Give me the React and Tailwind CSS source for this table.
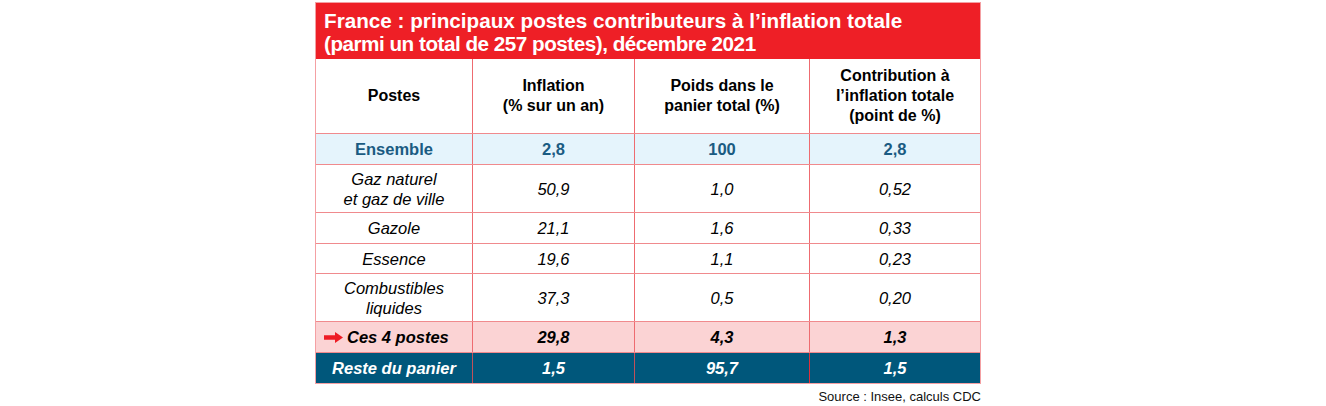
import React from 'react'

const rows = [
    { label: ['Gaz naturel', 'et gaz de ville'], values: ['50,9', '1,0', '0,52'], h: 'h-[48px]' },
    { label: ['Gazole'], values: ['21,1', '1,6', '0,33'], h: 'h-[31px]' },
    { label: ['Essence'], values: ['19,6', '1,1', '0,23'], h: 'h-[30px]' },
    { label: ['Combustibles', 'liquides'], values: ['37,3', '0,5', '0,20'], h: 'h-[48px]' },
]

const Arrow = () => (
    <svg width="19" height="11" viewBox="0 0 19 11" className="shrink-0">
        <path d="M0 3.2 H11 V0 L19 5.5 L11 11 V7.8 H0 Z" fill="#ee1c25" />
    </svg>
)

const cellBorder = 'border-r border-[#ee6b70]'

export default function App() {
    return (
        <div className="w-[1326px] h-[406px] bg-white font-['Liberation_Sans',Arial,sans-serif] text-black">
            <div className="ml-[315px] pt-[2px] w-[666px]">
                <div className="border border-[#f4a0a3]">
                    {/* titre */}
                    <div className="bg-[#ee1f26] text-white font-bold text-[20.7px] leading-[23px] pl-[8px] pt-[6px] pb-[4px] h-[56px]">
                        <div>France : principaux postes contributeurs à l’inflation totale</div>
                        <div className="tracking-[-0.5px]">(parmi un total de 257 postes), décembre 2021</div>
                    </div>

                    {/* en-tête */}
                    <div className="grid grid-cols-[157px_162px_175px_170px] border-b border-[#f08a8d] h-[75px] text-[16px] font-bold leading-[20px] text-center">
                        <div className={`${cellBorder} flex items-center justify-center`}>Postes</div>
                        <div className={`${cellBorder} flex flex-col items-center justify-center`}>
                            <span>Inflation</span>
                            <span>(% sur un an)</span>
                        </div>
                        <div className={`${cellBorder} flex flex-col items-center justify-center`}>
                            <span>Poids dans le</span>
                            <span>panier total (%)</span>
                        </div>
                        <div className="flex flex-col items-center justify-center">
                            <span>Contribution à</span>
                            <span>l’inflation totale</span>
                            <span>(point de %)</span>
                        </div>
                    </div>

                    {/* Ensemble */}
                    <div className="grid grid-cols-[157px_162px_175px_170px] border-b border-[#f08a8d] h-[31px] bg-[#e5f4fc] text-[#1a5b82] text-[16.5px] font-bold text-center">
                        <div className={`${cellBorder} flex items-center justify-center`}>Ensemble</div>
                        <div className={`${cellBorder} flex items-center justify-center`}>2,8</div>
                        <div className={`${cellBorder} flex items-center justify-center`}>100</div>
                        <div className="flex items-center justify-center">2,8</div>
                    </div>

                    {rows.map((r) => (
                        <div
                            key={r.label[0]}
                            className={`grid grid-cols-[157px_162px_175px_170px] border-b border-[#f08a8d] ${r.h} text-[16.5px] italic leading-[20px] text-center`}
                        >
                            <div className={`${cellBorder} flex flex-col items-center justify-center`}>
                                {r.label.map((l) => <span key={l}>{l}</span>)}
                            </div>
                            <div className={`${cellBorder} flex items-center justify-center`}>{r.values[0]}</div>
                            <div className={`${cellBorder} flex items-center justify-center`}>{r.values[1]}</div>
                            <div className="flex items-center justify-center">{r.values[2]}</div>
                        </div>
                    ))}

                    {/* Ces 4 postes */}
                    <div className="grid grid-cols-[157px_162px_175px_170px] border-b border-[#f08a8d] h-[31px] bg-[#fbd3d4] text-[16.5px] font-bold italic text-center">
                        <div className={`${cellBorder} flex items-center gap-[4px] pl-[8px]`}>
                            <Arrow />
                            <span>Ces 4 postes</span>
                        </div>
                        <div className={`${cellBorder} flex items-center justify-center`}>29,8</div>
                        <div className={`${cellBorder} flex items-center justify-center`}>4,3</div>
                        <div className="flex items-center justify-center">1,3</div>
                    </div>

                    {/* Reste du panier */}
                    <div className="grid grid-cols-[157px_162px_175px_170px] h-[30px] bg-[#00577b] text-white text-[16.5px] font-bold italic text-center">
                        <div className="border-r border-[#c0505a] flex items-center justify-center">Reste du panier</div>
                        <div className="border-r border-[#c0505a] flex items-center justify-center">1,5</div>
                        <div className="border-r border-[#e0303a] flex items-center justify-center">95,7</div>
                        <div className="flex items-center justify-center">1,5</div>
                    </div>
                </div>
                <div className="text-right text-[13px] leading-[16px] mt-[5px] text-[#111]">Source : Insee, calculs CDC</div>
            </div>
        </div>
    )
}
